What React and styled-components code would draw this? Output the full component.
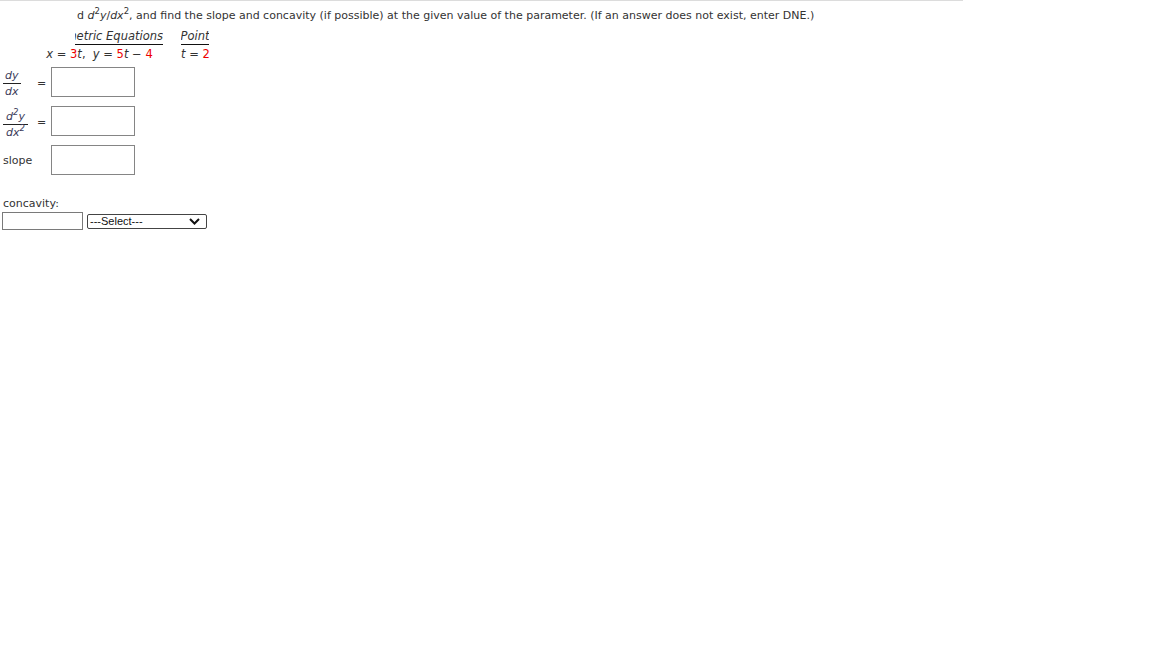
import React from "react";
import styled, { createGlobalStyle } from "styled-components";

const Global = createGlobalStyle`
  html, body { margin: 0; padding: 0; background: #fff; }
  body {
    font-family: "DejaVu Sans", Verdana, sans-serif;
    font-size: 11px;
    color: #333;
  }
`;

const Page = styled.div`
  width: 1152px;
  height: 648px;
  position: relative;
`;

const TopRule = styled.div`
  width: 963px;
  height: 1px;
  background: #dcdcdc;
`;

const Question = styled.div`
  padding-left: 77px;
  margin-top: 7px;
  line-height: 15px;
  white-space: nowrap;
`;

const Sup = styled.sup`
  font-size: 8.5px;
  line-height: 0;
  vertical-align: 5px;
`;

const I = styled.i`
  font-style: italic;
`;

const Red = styled.span`
  color: #e00;
`;

const EqTable = styled.div`
  display: grid;
  grid-template-columns: 130px 28px;
  column-gap: 18px;
  margin-left: 33px;
  margin-top: 6px;
  font-size: 11.5px;
`;

const HeadCell = styled.div`
  display: flex;
  justify-content: ${(p) => (p.$clip ? "flex-end" : "center")};
  overflow: hidden;
  white-space: nowrap;
  margin-left: ${(p) => (p.$clip ? "42px" : "0")};
  border-bottom: 1px solid #111;
  font-style: italic;
  line-height: 14px;
  padding-bottom: 1px;
`;

const ValCell = styled.div`
  text-align: center;
  white-space: nowrap;
  line-height: 14px;
  padding-top: 2px;
  padding-left: ${(p) => (p.$pad ? "3px" : "0")};
`;

const Answers = styled.div`
  display: grid;
  grid-template-columns: 37px 14px 84px;
  grid-auto-rows: 30px;
  row-gap: 9px;
  margin-top: 6px;
  align-items: center;
`;

const Label = styled.div`
  padding-left: 3px;
  white-space: nowrap;
`;

const Frac = styled.span`
  display: inline-flex;
  flex-direction: column;
  align-items: center;
  font-style: italic;
  color: #3c3c5a;
  line-height: 13px;
  padding-top: ${(p) => p.$top || 3}px;
`;

const Num = styled.span`
  padding: 0 ${(p) => p.$pad || 2}px 1px;
  border-bottom: 1px solid #222;
  white-space: nowrap;
`;

const Den = styled.span`
  padding: 1px 2px 0;
  white-space: nowrap;
`;

const Eq = styled.div`
  font-size: 11px;
  padding-top: 2px;
`;

const Box = styled.div`
  width: 84px;
  height: 30px;
  box-sizing: border-box;
  border: 1px solid #858585;
  background: #fff;
`;

const ConcLabel = styled.div`
  margin-top: 22px;
  padding-left: 3px;
  line-height: 14px;
`;

const ConcRow = styled.div`
  display: flex;
  align-items: center;
  gap: 4px;
  padding-left: 2px;
  margin-top: 1px;
`;

const SmallInput = styled.div`
  width: 81px;
  height: 18px;
  box-sizing: border-box;
  border: 1px solid #7a7a7a;
  background: #fff;
`;

const SelectBox = styled.div`
  width: 120px;
  height: 15px;
  box-sizing: border-box;
  border: 1px solid #444;
  border-radius: 2px;
  display: flex;
  align-items: center;
  justify-content: space-between;
  padding: 0 6px 0 2px;
  font-family: "Liberation Sans", Arial, sans-serif;
  font-size: 11px;
  color: #111;
`;

const Chevron = () => (
  <svg width="11" height="7" viewBox="0 0 11 7">
    <path d="M1 1 L5.5 5.5 L10 1" fill="none" stroke="#111" strokeWidth="2" />
  </svg>
);

export default function App() {
  return (
    <Page>
      <Global />
      <TopRule />
      <Question>
        d <I>d</I>
        <Sup>2</Sup>
        <I>y</I>/<I>dx</I>
        <Sup>2</Sup>, and find the slope and concavity (if possible) at the given value of the parameter. (If an answer does not exist, enter DNE.)
      </Question>
      <EqTable>
        <HeadCell $clip>Parametric Equations</HeadCell>
        <HeadCell>Point</HeadCell>
        <ValCell $pad>
          <I>x</I> = <Red>3</Red>
          <I>t</I>,&nbsp; <I>y</I> = <Red>5</Red>
          <I>t</I> − <Red>4</Red>
        </ValCell>
        <ValCell>
          <I>t</I> = <Red>2</Red>
        </ValCell>
      </EqTable>
      <Answers>
        <Label>
          <Frac>
            <Num>dy</Num>
            <Den>dx</Den>
          </Frac>
        </Label>
        <Eq>=</Eq>
        <Box />
        <Label>
          <Frac $top={6}>
            <Num $pad={3}>
              d<Sup>2</Sup>y
            </Num>
            <Den>
              dx<Sup>2</Sup>
            </Den>
          </Frac>
        </Label>
        <Eq>=</Eq>
        <Box />
        <Label>slope</Label>
        <span />
        <Box />
      </Answers>
      <ConcLabel>concavity:</ConcLabel>
      <ConcRow>
        <SmallInput />
        <SelectBox>
          <span>---Select---</span>
          <Chevron />
        </SelectBox>
      </ConcRow>
    </Page>
  );
}
